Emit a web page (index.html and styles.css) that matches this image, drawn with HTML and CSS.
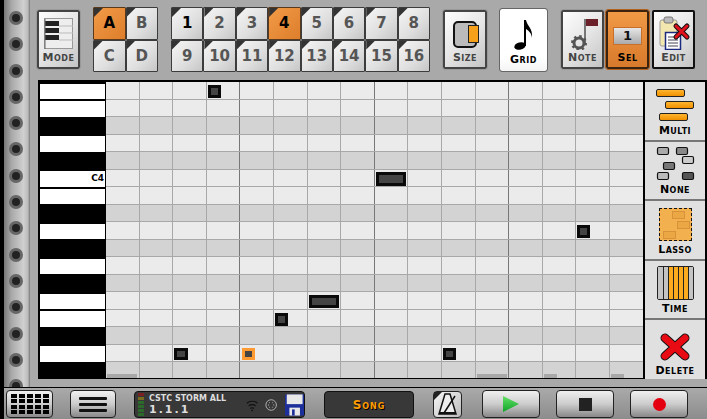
FILE: index.html
```html
<!DOCTYPE html>
<html lang="en">
<head>
    <meta charset="UTF-8">
    <title>Piano Roll</title>
    <link rel="stylesheet" href="styles.css">
</head>
<body>
<div class="app">
    <div class="upper">
        <div class="rail">
            <i class="hole"></i><i class="hole"></i><i class="hole"></i><i class="hole"></i><i class="hole"></i>
            <i class="hole"></i><i class="hole"></i><i class="hole"></i><i class="hole"></i><i class="hole"></i>
            <i class="hole"></i><i class="hole"></i><i class="hole"></i><i class="hole"></i><i class="hole"></i>
        </div>
        <div class="workspace">
            <div class="toolbar">
                <button class="big mode">
                    <svg width="30" height="32" viewBox="0 0 30 32">
                        <rect x="0.5" y="0.5" width="28" height="30" fill="#eee" stroke="#999"/>
                        <path d="M15 8H29M15 15H29M15 22H29" stroke="#bbb"/>
                        <path d="M1 5.500H15M1 12.500H15M1 19.500H15" stroke="#222" stroke-width="5"/>
                        <path d="M1 1V31" stroke="#666"/>
                    </svg>
                    <span class="label">Mode</span>
                </button>
                <div class="pads letters">
                    <button class="pad on">A</button><button class="pad">B</button>
                    <button class="pad">C</button><button class="pad">D</button>
                </div>
                <div class="pads numbers">
                    <button class="pad cur">1</button><button class="pad">2</button><button class="pad">3</button><button class="pad on">4</button>
                    <button class="pad">5</button><button class="pad">6</button><button class="pad">7</button><button class="pad">8</button>
                    <button class="pad">9</button><button class="pad">10</button><button class="pad">11</button><button class="pad">12</button>
                    <button class="pad">13</button><button class="pad">14</button><button class="pad">15</button><button class="pad">16</button>
                </div>
                <button class="big size">
                    <svg width="30" height="30" viewBox="0 0 30 30">
                        <rect x="4" y="2" width="22" height="25" rx="4" fill="#bbb" stroke="#111" stroke-width="2"/>
                        <rect x="18.500" y="5.500" width="10" height="17" fill="#f7a11a" stroke="#222"/>
                    </svg>
                    <span class="label">Size</span>
                </button>
                <button class="big grid-btn">
                    <svg width="24" height="34" viewBox="0 0 24 34">
                        <ellipse cx="8" cy="28" rx="5.800" ry="3.600" fill="#000" transform="rotate(-15 8 28)"/>
                        <path d="M12 2H14V28H12Z" fill="#000"/>
                        <path d="M14 2C15 8 21 10 20 20C19.500 15 17 13 14 11Z" fill="#000"/>
                    </svg>
                    <span class="label dark">Grid</span>
                </button>
                <button class="big note">
                    <svg width="34" height="34" viewBox="0 0 34 34">
                        <path d="M18 3H20V28H18Z" fill="#777"/>
                        <rect x="20" y="3" width="12" height="7" fill="#6b1f28"/>
                        <circle cx="13" cy="27" r="5" fill="none" stroke="#555" stroke-width="3"/>
                        <circle cx="13" cy="27" r="7" fill="none" stroke="#555" stroke-width="2" stroke-dasharray="2.500 3"/>
                    </svg>
                    <span class="label">Note</span>
                </button>
                <button class="big sel">
                    <span class="sel-box">1</span>
                    <span class="label dark">Sel</span>
                </button>
                <button class="big edit">
                    <svg width="34" height="34" viewBox="0 0 34 34">
                        <rect x="3" y="4" width="17" height="26" rx="2" fill="#f3e7b0" stroke="#999"/>
                        <rect x="7" y="1" width="9" height="6" rx="2" fill="#bbb" stroke="#777"/>
                        <rect x="8.500" y="16.500" width="15" height="17" fill="#fff" stroke="#1c2a80" stroke-width="1.500"/>
                        <path d="M11 21H21M11 24H21M11 27H21M11 30H21" stroke="#445"/>
                        <path d="M19 10L30 21M30 10L19 21" stroke="#111" stroke-width="5" stroke-linecap="round"/>
                        <path d="M19 10L30 21M30 10L19 21" stroke="#e0101c" stroke-width="3" stroke-linecap="round"/>
                    </svg>
                    <span class="label">Edit</span>
                </button>
            </div>
            <div class="editor">
                <div class="keys">
                    <div class="key"></div><div class="key"></div><div class="key black"></div><div class="key"></div>
                    <div class="key black"></div><div class="key">C4</div><div class="key"></div><div class="key black"></div>
                    <div class="key"></div><div class="key black"></div><div class="key"></div><div class="key black"></div>
                    <div class="key"></div><div class="key"></div><div class="key black"></div><div class="key"></div>
                    <div class="key black"></div>
                </div>
                <div class="lanes">
                    <div class="lane"></div><div class="lane"></div><div class="lane shade"></div><div class="lane"></div>
                    <div class="lane shade"></div><div class="lane"></div><div class="lane"></div><div class="lane shade"></div>
                    <div class="lane"></div><div class="lane shade"></div><div class="lane"></div><div class="lane shade"></div>
                    <div class="lane"></div><div class="lane"></div><div class="lane shade"></div><div class="lane"></div>
                    <div class="lane shade"></div>
                    <i class="evt" style="left:102px;top:3px;width:13px;height:13px"></i>
                    <i class="evt" style="left:270px;top:90px;width:30px;height:14px"></i>
                    <i class="evt" style="left:471px;top:143px;width:13px;height:13px"></i>
                    <i class="evt" style="left:203px;top:213px;width:30px;height:13px"></i>
                    <i class="evt" style="left:169px;top:231px;width:13px;height:13px"></i>
                    <i class="evt" style="left:68px;top:266px;width:14px;height:12px"></i>
                    <i class="evt picked" style="left:136px;top:266px;width:13px;height:12px"></i>
                    <i class="evt" style="left:337px;top:266px;width:13px;height:12px"></i>
                    <i class="vel" style="left:1px;width:30px"></i>
                    <i class="vel" style="left:371px;width:30px"></i>
                    <i class="vel" style="left:438px;width:13px"></i>
                    <i class="vel" style="left:505px;width:13px"></i>
                </div>
                <div class="tools">
                    <button class="tool">
                        <span class="multi-icon"><i></i><i></i><i></i></span>
                        <span class="label dark">Multi</span>
                    </button>
                    <button class="tool">
                        <svg width="40" height="36" viewBox="0 0 40 36">
                            <g stroke="#111" stroke-width="1.200">
                                <rect x="2.500" y="2.500" width="11" height="7" rx="1.500" fill="#aaa"/>
                                <rect x="21.500" y="2.500" width="11" height="7" rx="1.500" fill="#888"/>
                                <rect x="27.500" y="11.500" width="11" height="7" rx="1.500" fill="#ccc"/>
                                <rect x="8.500" y="17.500" width="11" height="7" rx="1.500" fill="#777"/>
                                <rect x="2.500" y="27.500" width="11" height="7" rx="1.500" fill="#bbb"/>
                                <rect x="27.500" y="27.500" width="11" height="7" rx="1.500" fill="#555"/>
                            </g>
                        </svg>
                        <span class="label dark">None</span>
                    </button>
                    <button class="tool">
                        <span class="lasso-icon"><i></i><i></i><i></i></span>
                        <span class="label dark">Lasso</span>
                    </button>
                    <button class="tool">
                        <span class="time-icon"><i></i><i></i><i class="o"></i><i class="o"></i><i class="o"></i><i class="o"></i><i></i></span>
                        <span class="label dark">Time</span>
                    </button>
                    <button class="tool">
                        <svg width="30" height="30" viewBox="0 0 30 30">
                            <path d="M5 6L25 24M25 6L5 24" stroke="#111" stroke-width="9" stroke-linecap="round"/>
                            <path d="M5 6L25 24M25 6L5 24" stroke="#e80b14" stroke-width="7" stroke-linecap="round"/>
                        </svg>
                        <span class="label dark">Delete</span>
                    </button>
                </div>
            </div>
        </div>
    </div>
    <div class="transport">
        <button class="tbtn wide-grid"><i></i><i></i><i></i><i></i><i></i><i></i><i></i><i></i><i></i><i></i><i></i><i></i><i></i><i></i><i></i><i></i><i></i><i></i><i></i><i></i></button>
        <button class="tbtn menu"><i></i><i></i><i></i></button>
        <div class="display info">
            <span class="leds"><i class="r"></i><i class="y"></i><i></i><i></i><i></i><i></i></span>
            <div class="readout">
                <span class="device">CSTC STORM ALL</span>
                <span class="pos">1.1.1</span>
            </div>
            <svg class="wifi" width="14" height="14" viewBox="0 0 14 14">
                <path d="M1 5C4 2 10 2 13 5M3 8C5 6 9 6 11 8M5 11C6 10 8 10 9 11" fill="none" stroke="#111" stroke-width="1.300"/>
                <circle cx="7" cy="13" r="1" fill="#111"/>
            </svg>
            <svg class="midi" width="14" height="14" viewBox="0 0 14 14">
                <circle cx="7" cy="7" r="6" fill="none" stroke="#bbb"/>
                <path d="M3.500 7H4.500M9.500 7H10.500M7 10H7.100M4.800 4.500H5.500M8.500 4.500H9.200M4.800 9.500H5.500M8.500 9.500H9.200" stroke="#ccc" stroke-width="1.200"/>
            </svg>
            <svg class="floppy" width="22" height="24" viewBox="0 0 22 24">
                <rect width="22" height="24" rx="1" fill="#1c2f9a"/>
                <rect x="2" y="0" width="18" height="11" fill="#e8e8e8"/>
                <rect x="5" y="15" width="12" height="9" fill="#e8e8e8"/>
                <rect x="8" y="17" width="3" height="7" fill="#1c2f9a"/>
            </svg>
        </div>
        <div class="display song"><span>Song</span></div>
        <button class="tbtn metro">
            <svg width="24" height="22" viewBox="0 0 24 22">
                <path d="M9 1H14L20 21H3Z" fill="#eee" stroke="#111" stroke-width="1.500"/>
                <path d="M8 20L19 3" stroke="#111" stroke-width="1.500"/>
                <path d="M4 19H20V21H4Z" fill="#111"/>
            </svg>
        </button>
        <button class="tbtn play"><i></i></button>
        <button class="tbtn stop"><i></i></button>
        <button class="tbtn rec"><i></i></button>
    </div>
</div>
</body>
</html>
```

FILE: styles.css
```css
* { box-sizing: border-box; }
html, body { margin: 0; padding: 0; }
body { width: 707px; height: 419px; overflow: hidden; background: #000; font-family: "DejaVu Sans", sans-serif; }
button { padding: 0; margin: 0; font-family: inherit; cursor: pointer; }
i { display: block; }

.app { width: 707px; height: 419px; padding-left: 4px; background: #000; }
.upper { display: flex; height: 387px; overflow: hidden; }

.rail { width: 26px; padding: 11px 2px 0 0; display: flex; flex-direction: column; gap: 12.3px; align-items: center; flex: none; background: linear-gradient(90deg, #777 0, #aaa 30%, #d0d0d0 75%, #bbb 92%, #777 100%); }
.hole { width: 14px; height: 14px; flex: none; border-radius: 50%; background: #222; border: 3px solid #666; }

.workspace { width: 677px; padding-left: 8px; background: #a9a9a9; }
.toolbar { height: 80px; margin-left: -1px; display: flex; align-items: flex-start; padding-top: 7px; }

.label { display: block; font-size: 11px; font-weight: bold; font-variant: small-caps; line-height: 11px; letter-spacing: 0.5px; color: #444; }
.label.dark { color: #000; }

.big { width: 43px; height: 59px; margin-top: 3px; display: flex; flex-direction: column; align-items: center; justify-content: flex-end; padding-bottom: 4px; border: 2px solid #444; border-radius: 2px; background: linear-gradient(135deg, #fdfdfd 0, #e6e6e6 50%, #c4c4c4 100%); outline: 1px solid #999; }
.big svg { margin-bottom: 2px; }
.mode { margin-right: 13px; }
.size { width: 44px; margin: 3px 13px 0 0; }
.grid-btn { width: 47px; height: 62px; margin: 2px 14px 0 0; background: linear-gradient(#fff 80%, #f4f4f4); border: none; outline: 1px solid #666; padding-bottom: 6px; }
.note { margin-right: 2px; }
.sel { margin-right: 3px; background: linear-gradient(#f09a45, #d87a2c); border-color: #3a2410; outline-color: #b5611e; }
.edit { border-color: #111; outline: none; }
.sel-box { width: 29px; height: 18px; margin-bottom: 7px; font-size: 13px; font-weight: bold; line-height: 16px; color: #111; text-align: center; background: linear-gradient(#e6e6e6, #aaa); border: 1px solid #c8702a; }

.pads { display: grid; grid-template-rows: 32.5px 32.5px; margin-right: 13px; flex: none; }
.letters { width: 65px; grid-template-columns: 1fr 1fr; }
.numbers { width: 259px; grid-template-columns: repeat(8, 1fr); }
.pad { position: relative; font-size: 15px; font-weight: bold; color: #555; background: linear-gradient(135deg, #f6f6f6 0, #dedede 60%, #c6c6c6 100%); border: 1px solid #3c3c3c; border-radius: 1px; }
.pad::before { content: ""; position: absolute; left: 0; top: 0; width: 9px; height: 9px; background: #333; clip-path: polygon(0 0, 100% 0, 0 100%); }
.pad.on { color: #000; background: linear-gradient(135deg, #f29b48, #dd7e2c); border-color: #5a3a1c; }
.pad.cur { color: #000; }

.editor { width: 669px; height: 299px; display: flex; background: #000; padding: 2px 2px 1px; overflow: hidden; }
.keys { width: 66px; flex: none; display: grid; grid-auto-rows: 17.5px; align-content: start; padding-right: 1px; }
.key { margin: 1.5px 0 0.5px; padding-right: 1px; background: #fff; font-size: 9px; font-weight: bold; line-height: 15px; text-align: right; color: #000; }
.key.black { background: #000; }

.lanes { position: relative; width: 537px; height: 296px; flex: none; overflow: hidden; }
.lane { height: 17.5px; border-bottom: 1px solid #a8a8a8; background-color: #ebebeb; background-image: repeating-linear-gradient(90deg, transparent 0 133.4px, #777 133.4px 134.4px), repeating-linear-gradient(90deg, transparent 0 32.6px, #a8a8a8 32.6px 33.6px); }
.lane.shade { background-color: #d3d3d3; }
.evt { position: absolute; background: #444; border: 3px solid #0a0a0a; }
.evt.picked { border-color: #ff9a33; }
.vel { position: absolute; bottom: 0; height: 4px; background: #a8a8a8; }

.tools { width: 62px; flex: none; display: flex; flex-direction: column; border-left: 2px solid #000; background: #e0e0e0; }
.tool { height: 59.500px; flex: none; display: flex; flex-direction: column; align-items: center; justify-content: flex-end; padding-bottom: 4px; background: #e0e0e0; border: none; border-bottom: 2px solid #777; }
.tool:last-child { border-bottom: none; }
.tool svg, .tool > span:first-child { margin-bottom: 3px; }

.multi-icon { width: 40px; height: 33px; display: flex; flex-direction: column; gap: 4px; }
.multi-icon i { width: 29px; height: 8px; background: linear-gradient(#ffb52e, #f09000); border: 1px solid #222; border-radius: 2px; }
.multi-icon i:nth-child(1) { margin-left: 1px; }
.multi-icon i:nth-child(2) { margin-left: 10px; }
.multi-icon i:nth-child(3) { margin-left: 4px; }

.lasso-icon { position: relative; width: 33px; height: 33px; background: #f2b14e; border: 1px dashed #111; }
.lasso-icon i { position: absolute; width: 13px; height: 8px; border: 1px solid #d8923a; background: #eaa744; }
.lasso-icon i:nth-child(1) { left: 12px; top: 2px; }
.lasso-icon i:nth-child(2) { left: 17px; top: 12px; }
.lasso-icon i:nth-child(3) { left: 3px; top: 22px; }

.time-icon { width: 37px; height: 34px; display: flex; border: 1px solid #222; border-radius: 2px; }
.time-icon i { width: 5px; border-left: 1px solid #222; background: #c4c4c4; }
.time-icon i:first-child { border-left: none; }
.time-icon i.o { background: #fbab1d; }

.transport { height: 32px; display: flex; align-items: flex-start; padding-top: 2px; border-top: 1px solid #000; background: linear-gradient(#aaa, #8c8c8c); }

.tbtn { height: 28px; flex: none; border: 1px solid #222; border-radius: 4px; background: linear-gradient(#f0f0f0, #ccc 50%, #888); }
.wide-grid { width: 47px; margin-left: 2px; display: grid; grid-template-columns: repeat(5, 6px); grid-template-rows: repeat(4, 4px); gap: 1.500px 2px; justify-content: center; align-content: center; }
.wide-grid i { background: #000; }
.menu { width: 46px; margin-left: 17px; display: flex; flex-direction: column; justify-content: center; align-items: center; gap: 3px; }
.menu i { width: 28px; height: 3px; border-radius: 1px; background: #111; }

.display { height: 27px; margin-top: 1px; flex: none; border: 1px solid #111; border-radius: 4px; background: #383838; }
.info { width: 171px; margin-left: 18px; display: flex; align-items: center; padding-left: 3px; }
.leds { width: 6px; display: flex; flex-direction: column; gap: 1px; flex: none; }
.leds i { height: 3px; background: #2c6a2c; }
.leds .r { background: #7a2020; }
.leds .y { background: #7a6a20; }
.readout { width: 91px; margin-left: 5px; display: flex; flex-direction: column; flex: none; }
.device { font-size: 8px; font-weight: bold; line-height: 10px; color: #ddd; white-space: nowrap; }
.pos { font-size: 11px; font-weight: bold; line-height: 11px; color: #ddd; letter-spacing: 2px; }
.wifi { margin-left: 6px; }
.midi { margin-left: 7px; }
.floppy { margin-left: 7px; }

.song { width: 90px; margin-left: 19px; display: flex; align-items: center; justify-content: center; }
.song span { font-size: 12px; font-weight: bold; font-variant: small-caps; letter-spacing: 1px; color: #ff9c00; text-shadow: 1px 1px 0 #000; }

.metro { width: 29px; margin-left: 19px; margin-top: 1px; height: 27px; position: relative; padding-top: 1px; background: linear-gradient(135deg, #f6f6f6, #bbb); }
.metro::before { content: ""; position: absolute; left: 0; top: 0; width: 8px; height: 8px; background: #222; clip-path: polygon(0 0, 100% 0, 0 100%); }
.play, .stop, .rec { width: 58px; display: flex; align-items: center; justify-content: center; }
.play { margin-left: 20px; }
.stop { margin-left: 16px; }
.rec { margin-left: 16px; }
.play i { width: 16px; height: 16px; background: linear-gradient(#66e066, #0fa32a); clip-path: polygon(0 0, 100% 50%, 0 100%); }
.stop i { width: 13px; height: 13px; background: #222; }
.rec i { width: 13px; height: 13px; border-radius: 50%; background: #e4000f; }
```
